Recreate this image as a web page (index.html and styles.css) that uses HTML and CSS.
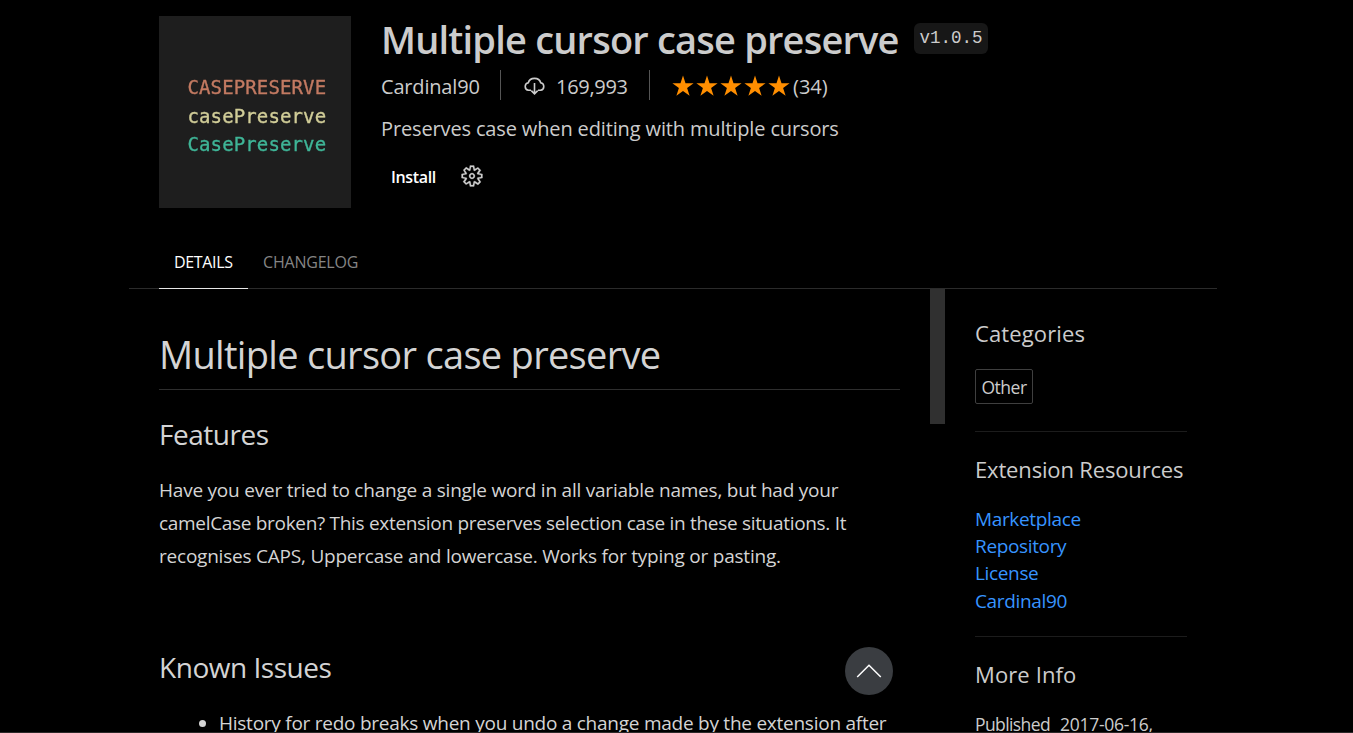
FILE: index.html
```html
<!DOCTYPE html>
<html lang="en">
<head>
<meta charset="utf-8">
<title>Multiple cursor case preserve</title>
<link rel="stylesheet" href="styles.css">
</head>
<body>
<main class="editor">
  <header class="header">
    <div class="logo">
      <span class="logo-upper">CASEPRESERVE</span>
      <span class="logo-camel">casePreserve</span>
      <span class="logo-pascal">CasePreserve</span>
    </div>
    <div class="summary">
      <div class="title-row"><h1 class="name">Multiple cursor case preserve</h1><code class="version">v1.0.5</code></div>
      <div class="meta">
        <span class="publisher">Cardinal90</span>
        <span class="installs">
          <svg class="cloud" viewBox="0 0 23 18" fill="none" stroke="#ccc" stroke-width="1.6"><path d="M8 13.300H5.500a3.800 3.800 0 0 1-.2-7.500C6 3 8.200 1.400 11.500 1.400S17 3 17.700 5.800a3.800 3.800 0 0 1-.2 7.500H15M11.500 6v10.500M8.300 13.600l3.200 3.200 3.200-3.200"/></svg>
          <span class="count">169,993</span>
        </span>
        <span class="rating">
          <svg class="stars" viewBox="0 0 120 24" fill="#ff8e00"><defs><path id="star" d="M12 1.500l2.500 7.700h8.100l-6.500 4.800 2.500 7.700-6.600-4.800-6.600 4.800 2.500-7.700-6.500-4.800h8.100z"/></defs><use href="#star"/><use href="#star" x="24"/><use href="#star" x="48"/><use href="#star" x="72"/><use href="#star" x="96"/></svg>
          <span class="votes">(34)</span>
        </span>
      </div>
      <p class="description">Preserves case when editing with multiple cursors</p>
      <div class="actions">
        <span class="install">Install</span>
        <svg class="gear" viewBox="0 0 16 16" fill="#ccc" stroke="#ccc" stroke-width="0.15"><path d="M9.100 4.400L8.600 2H7.400l-.5 2.400-.7.3-2-1.300-.9.800 1.300 2-.2.700-2.400.5v1.200l2.400.5.300.8-1.300 2 .8.800 2-1.300.8.300.4 2.300h1.200l.5-2.400.8-.3 2 1.300.8-.8-1.300-2 .3-.8 2.300-.4V7.400l-2.400-.5-.3-.8 1.300-2-.8-.8-2 1.300-.7-.2zM9.400 1l.5 2.400L12 2.100l2 2-1.400 2.100 2.400.4v2.800l-2.400.5L14 12l-2 2-2.100-1.400-.5 2.400H6.600l-.5-2.400L4 13.900l-2-2 1.400-2.100L1 9.400V6.600l2.400-.5L2.100 4l2-2 2.100 1.400.4-2.400h2.800zm.6 7c0 1.100-.9 2-2 2s-2-.9-2-2 .9-2 2-2 2 .9 2 2zM8 9c.6 0 1-.4 1-1s-.4-1-1-1-1 .4-1 1 .4 1 1 1z"/></svg>
      </div>
    </div>
  </header>
  <nav class="tabs"><a class="tab tab-active">DETAILS</a><a class="tab">CHANGELOG</a></nav>
  <div class="body">
    <article class="readme">
      <h1 class="readme-title">Multiple cursor case preserve</h1>
      <h2 class="section">Features</h2>
      <p class="text">Have you ever tried to change a single word in all variable names, but had your<br><span class="tight">camelCase broken? This extension preserves selection case in these situations. It</span><br>recognises CAPS, Uppercase and lowercase. Works for typing or pasting.</p>
      <h2 class="section issues">Known Issues</h2>
      <ul class="list"><li>History for redo breaks when you undo a change made by the extension after</li></ul>
      <button class="to-top" aria-label="Scroll to top"><svg viewBox="0 0 48 48" fill="none" stroke="#fff" stroke-width="1.500"><path d="M12.200 30L24 18.200 35.800 30"/></svg></button>
    </article>
    <div class="scrollbar"></div>
    <aside class="sidebar">
      <section class="group categories"><h3 class="group-title">Categories</h3><span class="category">Other</span></section>
      <section class="group resources"><h3 class="group-title resources-title">Extension Resources</h3>
        <div class="links"><a>Marketplace</a><a>Repository</a><a>License</a><a>Cardinal90</a></div></section>
      <section class="group"><h3 class="group-title">More Info</h3><div class="info"><span class="info-label">Published</span><span class="info-value">2017-06-16,</span></div></section>
    </aside>
  </div>
</main>
<div class="bottom-edge"></div>
</body>
</html>
```
FILE: styles.css
```css
* { box-sizing: border-box; }
body { margin: 0; height: 733px; overflow: hidden; background: #000; color: #ccc; font-family: "Open Sans", "Noto Sans", sans-serif; }
h1, h2, h3, p, ul { margin: 0; padding: 0; font-weight: 400; white-space: nowrap; }
.editor { width: 1088px; height: 733px; margin-left: 129px; overflow: hidden; display: flex; flex-direction: column; }
.header { display: flex; gap: 30px; padding: 16px 30px 0; height: 236px; flex: none; }
.logo { width: 192px; height: 192px; background: #1e1e1e; padding: 57px 0 0 28.500px; display: flex; flex-direction: column; font: 19px/28.500px "DejaVu Sans Mono", monospace; letter-spacing: 0.12px; -webkit-text-stroke: 0.35px; }
.logo span { filter: blur(0.4px); }
.logo-upper { color: #c37a62; }
.logo-camel { color: #d1cd98; }
.logo-pascal { color: #3fb597; }
.title-row { display: flex; height: 49px; align-items: flex-start; gap: 16px; }
.name { width: 517px; font-size: 38px; line-height: 47px; font-weight: 600; letter-spacing: -0.8px; }
.version { font: 17.500px/31px "Liberation Mono", monospace; width: 74px; height: 31px; margin-top: 7px; padding-left: 5.500px; background: #171717; border-radius: 6px; }
.meta { display: flex; height: 30px; margin-top: 5px; font-size: 20px; line-height: 33px; }
.publisher { width: 120px; border-right: 1px solid #555; letter-spacing: -0.18px; }
.installs { width: 149px; padding-left: 22px; border-right: 1px solid #555; display: flex; gap: 10px; }
.cloud { width: 23px; height: 18px; margin-top: 7px; }
.count { letter-spacing: -0.3px; }
.rating { padding-left: 21px; display: flex; gap: 2px; }
.stars { width: 120px; height: 24px; margin-top: 4px; }
.description { font-size: 20px; line-height: 30px; margin-top: 14px; letter-spacing: -0.14px; }
.actions { display: flex; margin-top: 18px; padding-left: 10px; height: 30px; }
.install { width: 69px; font-size: 16px; font-weight: 600; line-height: 30px; color: #fff; letter-spacing: -0.35px; }
.gear { width: 24px; height: 24px; margin-top: 2px; }
.tabs { display: flex; height: 53px; padding-left: 30px; border-bottom: 1px solid #2b2b2b; flex: none; }
.tab { height: 53px; padding: 16px 0 0 15px; width: 89px; font-size: 16px; line-height: 21px; color: #858585; white-space: nowrap; letter-spacing: -0.2px; }
.tab-active { color: #fff; border-bottom: 1px solid #e7e7e7; letter-spacing: -0.35px; }
.body { display: flex; flex: 1; min-height: 0; }
.readme { width: 801px; padding: 0 30px; position: relative; color: #d4d4d4; flex: none; }
.readme-title { font-size: 38px; line-height: 52px; height: 101px; padding-top: 39px; border-bottom: 1px solid #2e2e2e; width: 741px; letter-spacing: -0.7px; }
.section { font-size: 28px; line-height: 36px; margin-top: 26px; letter-spacing: -0.47px; }
.text { font-size: 19px; line-height: 33px; margin-top: 22px; letter-spacing: -0.22px; }
.tight { letter-spacing: -0.31px; }
.issues { margin-top: 76px; }
.list { font-size: 19px; line-height: 33px; margin-top: 22px; padding-left: 60px; letter-spacing: -0.25px; }
.to-top { position: absolute; left: 716px; top: 358px; width: 48px; height: 48px; padding: 0; border: 0; border-radius: 50%; background: #3a3d41; }
.to-top svg { display: block; width: 48px; height: 48px; }
.scrollbar { width: 15px; height: 135px; background: #303030; flex: none; }
.sidebar { width: 272px; padding: 0 30px; }
.group-title { font-size: 22px; line-height: 30px; letter-spacing: 0.12px; }
.resources-title { letter-spacing: -0.16px; }
.group { padding-top: 22px; white-space: nowrap; }
.categories { padding-top: 29px; height: 143px; border-bottom: 1px solid #1c1c1c; }
.category { display: block; width: 58px; height: 35px; margin-top: 21px; padding-left: 5.500px; border: 1px solid #3f3f3f; border-radius: 2px; font-size: 17.500px; line-height: 35px; letter-spacing: -0.5px; }
.resources { height: 205px; border-bottom: 1px solid #1c1c1c; }
.links { display: flex; flex-direction: column; align-items: flex-start; margin-top: 22px; font-size: 19px; line-height: 27.200px; color: #3794ff; letter-spacing: -0.35px; }
.info { display: flex; gap: 10px; margin-top: 20px; font-size: 17.500px; line-height: 30px; }
.info-label { width: 75px; letter-spacing: -0.6px; }
.info-value { letter-spacing: -0.28px; }
.bottom-edge { position: absolute; left: 0; bottom: 0; width: 100%; height: 1px; background: #2b2929; }
```
